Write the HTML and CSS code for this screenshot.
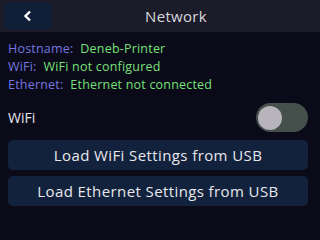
FILE: index.html
```html
<!DOCTYPE html>
<html lang="en">
<head>
    <meta charset="UTF-8">
    <title>Network</title>
    <link rel="stylesheet" href="styles.css">
</head>
<body>

<div class="header">
    <button class="back-button" aria-label="Back">
        <svg width="10" height="12" viewBox="0 0 10 12">
            <path d="M7 1.5 L2.5 6 L7 10.5" fill="none" stroke="#ffffff" stroke-width="2.4"/>
        </svg>
    </button>
    <div class="title">Network</div>
</div>

<div class="content">
    <div class="info">
        <div class="info-row"><span class="label">Hostname:</span>  <span class="value">Deneb-Printer</span></div>
        <div class="info-row"><span class="label">WiFi:</span>  <span class="value">WiFi not configured</span></div>
        <div class="info-row"><span class="label">Ethernet:</span>  <span class="value">Ethernet not connected</span></div>
    </div>

    <div class="toggle-row">
        <span>WiFi</span>
        <div class="toggle"><div class="knob"></div></div>
    </div>

    <button class="action">Load WiFi Settings from USB</button>
    <button class="action">Load Ethernet Settings from USB</button>
</div>

</body>
</html>
```

FILE: styles.css
```css
body {
    margin: 0;
    width: 320px;
    height: 240px;
    background-color: #0a0a18;
    font-family: "Open Sans", sans-serif;
    color: #e6e6ea;
    overflow: hidden;
}
.header {
    display: flex;
    align-items: center;
    height: 32px;
    padding: 2px 4px 2px 4px;
    box-sizing: border-box;
    background-color: #1c1b2a;
}
.back-button {
    width: 48px;
    height: 28px;
    border: none;
    border-radius: 5px;
    background-color: #0f1f38;
    display: flex;
    align-items: center;
    justify-content: center;
    padding: 0;
}
.title {
    flex: 1;
    text-align: center;
    font-size: 15px;
    letter-spacing: 0.3px;
    color: #d8d8dc;
    padding-right: 16px;
}
.content {
    padding: 8px 12px 0 8px;
}
.info {
    font-size: 12.5px;
    line-height: 18px;
    letter-spacing: 0.2px;
}
.info-row {
    white-space: pre;
}
.label {
    color: #7676e0;
}
.value {
    color: #78e078;
}
.toggle-row {
    display: flex;
    align-items: center;
    justify-content: space-between;
    margin-top: 9px;
    font-size: 14px;
}
.toggle {
    width: 52px;
    height: 29px;
    border-radius: 15px;
    background-color: #454f4c;
    display: flex;
    align-items: center;
    padding-left: 2px;
    box-sizing: border-box;
}
.knob {
    width: 24px;
    height: 24px;
    border-radius: 50%;
    background-color: #b8b4bc;
}
.action {
    display: block;
    width: 300px;
    height: 30px;
    margin-top: 8px;
    border: none;
    border-radius: 5px;
    background-color: #12223c;
    color: #e8e8ec;
    font-family: "Open Sans", sans-serif;
    font-size: 15px;
    letter-spacing: 0.4px;
}
.action + .action {
    margin-top: 6px;
}
```
